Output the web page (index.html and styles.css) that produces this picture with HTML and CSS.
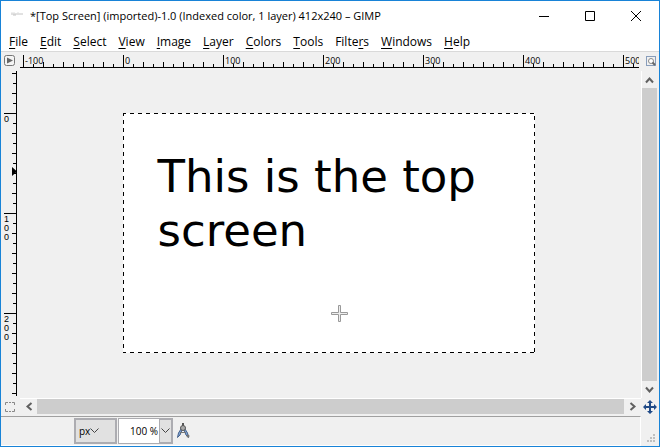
FILE: index.html
```html
<!DOCTYPE html>
<html lang="en">
<head>
<meta charset="utf-8">
<title>*[Top Screen] (imported)-1.0 (Indexed color, 1 layer) 412x240 – GIMP</title>
<link rel="stylesheet" href="styles.css">
</head>
<body>
<div class="window">
  <header class="titlebar">
    <svg class="app-icon" width="16" height="16" aria-hidden="true"><path d="M2 6h12M4 7h3" stroke="#c4c4c4"/><path d="M2 5h4M8 5h2" stroke="#dedede"/></svg>
    <h1 class="title">*[Top Screen] (imported)-1.0 (Indexed color, 1 layer) 412x240 – GIMP</h1>
    <div class="controls">
      <button class="control" aria-label="Minimize"><svg width="10" height="10"><path d="M0 5.500h10" stroke="#000"/></svg></button>
      <button class="control" aria-label="Maximize"><svg width="10" height="10"><path d="M.5.5h9v9h-9z" fill="none" stroke="#000"/></svg></button>
      <button class="control" aria-label="Close"><svg width="10" height="10"><path d="M0 0l10 10M10 0L0 10" stroke="#000"/></svg></button>
    </div>
  </header>

  <nav class="menubar" aria-label="Main menu">
    <button class="menu"><u>F</u>ile</button>
    <button class="menu"><u>E</u>dit</button>
    <button class="menu"><u>S</u>elect</button>
    <button class="menu"><u>V</u>iew</button>
    <button class="menu"><u>I</u>mage</button>
    <button class="menu"><u>L</u>ayer</button>
    <button class="menu"><u>C</u>olors</button>
    <button class="menu"><u>T</u>ools</button>
    <button class="menu">Filte<u>r</u>s</button>
    <button class="menu"><u>W</u>indows</button>
    <button class="menu"><u>H</u>elp</button>
  </nav>

  <main class="workspace">
    <button class="corner corner-menu" aria-label="Image menu">
      <svg width="11" height="11"><rect x=".5" y=".5" width="10" height="10" rx="2" fill="#f4f4f4" stroke="#777"/><path d="M3 2.500L9 5.500L3 8.500z" fill="#666"/></svg>
    </button>
    <svg class="ruler ruler-x" role="img" aria-label="Horizontal ruler">
      <defs>
        <pattern id="ticks-x" x="3" y="0" width="100" height="16" patternUnits="userSpaceOnUse">
          <path d="M0 3h1v13h-1zM20 10h1v6h-1zM40 10h1v6h-1zM60 10h1v6h-1zM80 10h1v6h-1zM10 12h1v4h-1zM30 12h1v4h-1zM50 12h1v4h-1zM70 12h1v4h-1zM90 12h1v4h-1z"/>
        </pattern>
      </defs>
      <rect width="100%" height="16" fill="url(#ticks-x)"/>
      <rect y="15" width="100%" height="1"/>
      <text x="5" y="12">-100</text>
      <text x="105" y="12">0</text>
      <text x="205" y="12">100</text>
      <text x="305" y="12">200</text>
      <text x="405" y="12">300</text>
      <text x="505" y="12">400</text>
      <text x="605" y="12">500</text>
    </svg>
    <button class="corner corner-zoom" aria-label="Zoom image when window size changes">
      <svg width="10" height="10"><path d="M.5.5h9v9h-9z" fill="none" stroke="#204a87" stroke-dasharray="1 1"/><circle cx="5" cy="5" r="2.500" fill="#fff" stroke="#888"/><path d="M6.500 6.500l2.500 2.500" stroke="#666" stroke-width="2"/></svg>
    </button>

    <svg class="ruler ruler-y" role="img" aria-label="Vertical ruler">
      <defs>
        <pattern id="ticks-y" x="0" y="42" width="16" height="100" patternUnits="userSpaceOnUse">
          <path d="M3 0h13v1h-13zM11 20h5v1h-5zM11 40h5v1h-5zM11 60h5v1h-5zM11 80h5v1h-5zM12 10h4v1h-4zM12 30h4v1h-4zM12 50h4v1h-4zM12 70h4v1h-4zM12 90h4v1h-4z"/>
        </pattern>
      </defs>
      <rect width="16" height="100%" fill="url(#ticks-y)"/>
      <rect x="15" width="1" height="100%"/>
      <path d="M11 96l5 4.500l-5 4.500z"/>
      <text x="3" y="51">0</text>
      <text><tspan x="3" y="151">1</tspan><tspan x="3" y="160">0</tspan><tspan x="3" y="169">0</tspan></text>
      <text><tspan x="3" y="251">2</tspan><tspan x="3" y="260">0</tspan><tspan x="3" y="269">0</tspan></text>
    </svg>
    <section class="viewport" aria-label="Canvas">
      <div class="image">
        <p class="image-text">This is the top screen</p>
        <svg class="outline" aria-hidden="true">
          <g stroke="#000" stroke-dasharray="4 4">
            <line x1="0" y1=".5" x2="100%" y2=".5" stroke-dashoffset="1"/>
            <line x1="0" y1="239.500" x2="100%" y2="239.500" stroke-dashoffset="1"/>
            <line x1=".5" y1="0" x2=".5" y2="100%" stroke-dashoffset="1"/>
            <line x1="411.500" y1="0" x2="411.500" y2="100%" stroke-dashoffset="5"/>
          </g>
        </svg>
        <svg class="cursor" width="17" height="17" aria-hidden="true"><path d="M7.500.5h2v7h7v2h-7v7h-2v-7h-7v-2h7z" fill="#eee" stroke="#999"/></svg>
      </div>
    </section>
    <div class="scroll scroll-y">
      <button class="arrow" aria-label="Scroll up"><svg width="9" height="8"><path d="M1 6.500L4.500 2.500L8 6.500" fill="none" stroke="#606060" stroke-width="2"/></svg></button>
      <div class="thumb"></div>
      <button class="arrow" aria-label="Scroll down"><svg width="9" height="8"><path d="M1 1.500L4.500 5.500L8 1.500" fill="none" stroke="#606060" stroke-width="2"/></svg></button>
    </div>

    <button class="corner corner-mask" aria-label="Toggle quick mask">
      <svg width="10" height="10"><path d="M.5 3V.5H3M7 .5h2.500V3M9.500 7v2.500H7M3 9.500H.5V7M4 .5h2M4 9.500h2" fill="none" stroke="#888"/></svg>
    </button>
    <div class="scroll scroll-x">
      <button class="arrow" aria-label="Scroll left"><svg width="8" height="9"><path d="M6.500 1L2.500 4.500L6.500 8" fill="none" stroke="#606060" stroke-width="2"/></svg></button>
      <div class="thumb"></div>
      <button class="arrow" aria-label="Scroll right"><svg width="8" height="9"><path d="M1.500 1L5.500 4.500L1.500 8" fill="none" stroke="#606060" stroke-width="2"/></svg></button>
    </div>
    <button class="corner" aria-label="Navigate the image display">
      <svg width="14" height="14"><path d="M7 0l3 3H8v3h3V4l3 3l-3 3V8H8v3h2l-3 3l-3-3h2V8H3v2L0 7l3-3v2h3V3H4z" fill="#204a87"/></svg>
    </button>
  </main>

  <footer class="statusbar">
    <div class="status-items">
      <button class="unit" aria-label="Unit">px<svg width="9" height="6"><path d="M.5.5l4 4l4-4" fill="none" stroke="#444"/></svg></button>
      <div class="zoom">
        <input class="zoom-value" type="text" value="100 %" aria-label="Zoom">
        <button class="zoom-arrow" aria-label="Zoom levels"><svg width="9" height="6"><path d="M.5.5l4 4l4-4" fill="none" stroke="#444"/></svg></button>
      </div>
      <svg class="compass" width="14" height="16" aria-hidden="true"><path d="M5 6L2.500 10L1.500 14.500L4 12L6 7M9 6l2.500 4l1 4.500L10 12L8 7" fill="#7fa5d8" stroke="#46618a"/><path d="M4 9.500h6" stroke="#777"/><path d="M7 0v3" stroke="#555" stroke-width="2"/><circle cx="7" cy="5" r="2.500" fill="#aaa" stroke="#555"/><circle cx="12" cy="13" r="1.500" fill="#777"/></svg>
    </div>
    <svg class="grip" width="8" height="8" aria-hidden="true"><path d="M6 0h2v2h-2zM3 3h2v2h-2zM6 3h2v2h-2zM0 6h2v2h-2zM3 6h2v2h-2zM6 6h2v2h-2z" fill="#bfbfbf"/></svg>
  </footer>
</div>
</body>
</html>
```
FILE: styles.css
```css
* { box-sizing: border-box; }

body {
  margin: 0;
  font-family: "Open Sans", "Noto Sans", sans-serif;
  font-size: 12px;
  line-height: 16px;
  color: #000;
}

button {
  margin: 0;
  padding: 0;
  border: 0;
  background: none;
  color: inherit;
  font: inherit;
}

svg { display: block; }

.window {
  display: flex;
  flex-direction: column;
  height: 100vh;
  border: 1px solid #1883d7;
  background: #f0f0f0;
  overflow: hidden;
}

.titlebar {
  display: flex;
  align-items: center;
  height: 30px;
  padding-left: 8px;
  background: #fff;
}

.title {
  flex: 1;
  margin: 0 0 0 5px;
  font-size: 11px;
  font-weight: 400;
  white-space: nowrap;
}

.controls { display: flex; }

.control {
  display: grid;
  place-items: center;
  width: 46px;
  height: 28px;
}

.menubar {
  display: flex;
  gap: 12px;
  height: 21px;
  padding: 1px 8px 0;
  border-bottom: 1px solid #d9d9d9;
  background: #fff;
}

.menu u { text-underline-offset: 2px; }

.workspace {
  flex: 1;
  display: grid;
  grid-template-columns: 19px 1fr 18px;
  grid-template-rows: 19px 1fr 18px;
  min-height: 0;
}

.corner {
  display: grid;
  place-items: center;
}

.corner-menu { padding: 0 2px 3px 0; }

.corner-zoom { padding: 0 0 1px 1px; }

.corner-mask { padding-right: 2px; }

.ruler { font-size: 9px; }

.ruler-x {
  width: calc(100% - 2px);
  height: 16px;
}

.ruler-y {
  width: 16px;
  height: calc(100% - 2px);
  font-family: "Liberation Sans", sans-serif;
}

.viewport {
  display: flex;
  align-items: center;
  justify-content: center;
  min-height: 0;
  padding: 0 4px 4px 0;
}

.image {
  position: relative;
  width: 412px;
  height: 240px;
  padding: 37px 30px 0 35px;
  background: #fff;
}

.image-text {
  margin: 0;
  font-family: "DejaVu Sans", sans-serif;
  font-size: 45px;
  line-height: 54px;
}

.outline {
  position: absolute;
  inset: 0;
  width: 100%;
  height: 100%;
}

.cursor {
  position: absolute;
  left: 208px;
  top: 192px;
}

.scroll { display: flex; }

.scroll-y {
  flex-direction: column;
  padding-right: 2px;
  border-left: 1px solid #fff;
}

.scroll-x {
  padding-bottom: 2px;
  border-top: 1px solid #fff;
}

.thumb {
  flex: 1;
  background: #cdcdcd;
}

.arrow {
  display: grid;
  place-items: center;
  flex: 0 0 17px;
}

.statusbar {
  display: flex;
  height: 30px;
}

.status-items {
  flex: 1;
  display: flex;
  align-items: center;
  gap: 1px;
  padding-left: 73px;
  border: solid #fff;
  border-width: 0 1px 1px 0;
  border-top: 1px solid #a0a0a0;
}

.unit {
  display: flex;
  align-items: center;
  width: 43px;
  height: 26px;
  padding-left: 3px;
  border: 2px solid #acacb1;
  background: #e1e1e1;
  font-size: 10px;
}

.zoom {
  display: flex;
  width: 55px;
  height: 26px;
  border: 1px solid #acacb1;
  background: #fff;
}

.zoom-value {
  flex: 1;
  min-width: 0;
  padding: 0 1px 0 0;
  border: 0;
  font: inherit;
  font-size: 10px;
  text-align: right;
}

.zoom-arrow {
  display: grid;
  place-items: center;
  width: 13px;
  border: 1px solid #acacb1;
  background: #e1e1e1;
}

.compass { margin-left: 2px; }

.grip {
  align-self: flex-end;
  margin: 0 4px 4px 6px;
}
```
